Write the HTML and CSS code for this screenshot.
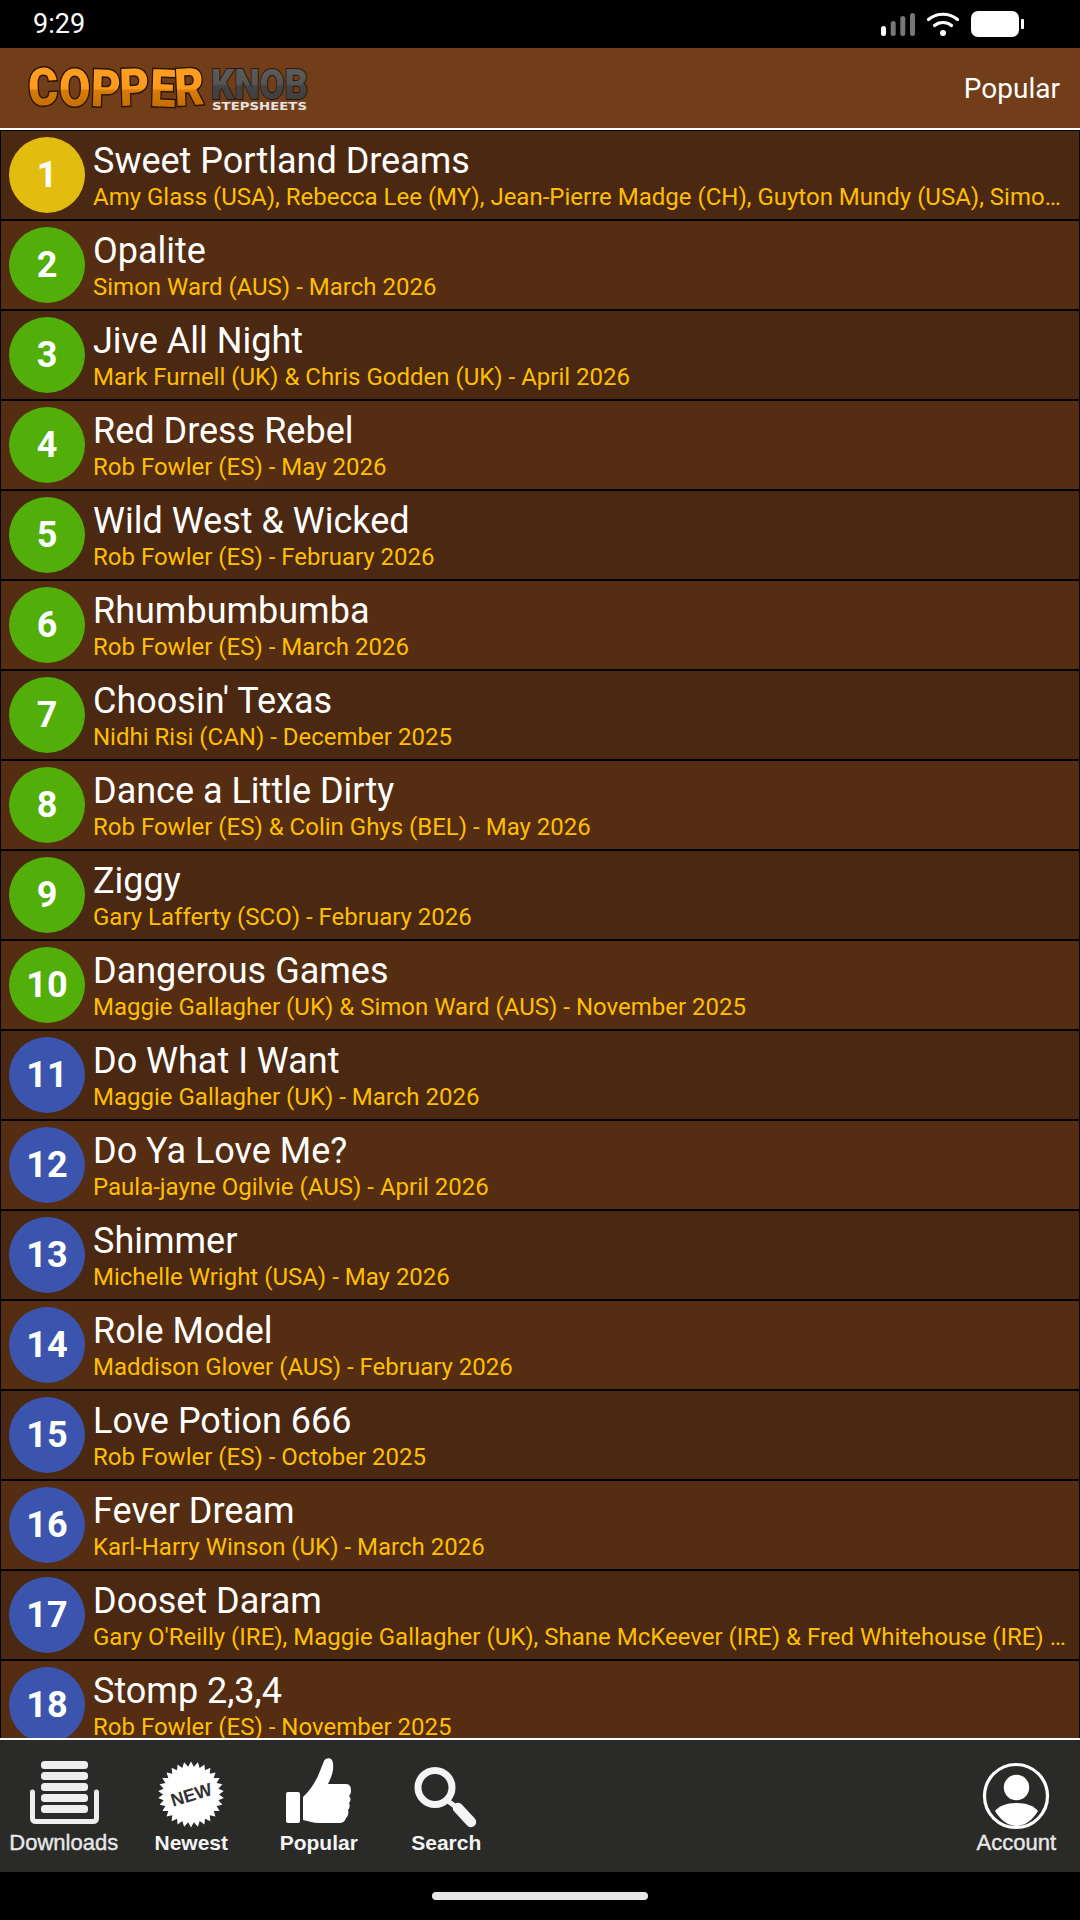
FILE: index.html
```html
<!DOCTYPE html>
<html lang="en">
<head>
    <meta charset="UTF-8">
    <meta name="viewport" content="width=device-width, initial-scale=1.0">
    <title>CopperKnob Stepsheets - Popular</title>
    <link rel="stylesheet" href="styles.css">
</head>
<body>
    <div class="status-bar">
        <span class="clock">9:29</span>
        <div class="status-icons">
            <svg width="34" height="23" viewBox="0 0 34 23">
                <rect x="0" y="13" width="5" height="10" rx="2.5" fill="#fff"/>
                <rect x="9.7" y="8" width="5" height="15" rx="2.5" fill="#777"/>
                <rect x="19.3" y="3" width="5" height="20" rx="2.5" fill="#777"/>
                <rect x="29" y="0" width="5" height="23" rx="2.5" fill="#777"/>
            </svg>
            <svg width="32" height="24" viewBox="0 0 32 24">
                <path d="M1.500 7.500 C9.500 0.500 22.500 0.500 30.500 7.500" fill="none" stroke="#fff" stroke-width="3.2" stroke-linecap="round"/>
                <path d="M7.500 13.500 C12 9.500 20 9.500 24.500 13.500" fill="none" stroke="#fff" stroke-width="3.2" stroke-linecap="round"/>
                <circle cx="16" cy="21" r="3" fill="#fff"/>
            </svg>
            <svg width="53" height="26" viewBox="0 0 53 26">
                <rect x="0" y="0" width="48" height="26" rx="7" fill="#fff"/>
                <rect x="50" y="8" width="3" height="10" rx="1" fill="#fff"/>
            </svg>
        </div>
    </div>

    <header>
        <svg class="logo" width="290" height="50" viewBox="0 0 290 50">
            <defs>
                <linearGradient id="copperFill" x1="0" y1="0" x2="0" y2="1">
                    <stop offset="0" stop-color="#ffa025"/>
                    <stop offset="0.5" stop-color="#ff9a1c"/>
                    <stop offset="0.54" stop-color="#d67c08"/>
                    <stop offset="1" stop-color="#b86200"/>
                </linearGradient>
                <linearGradient id="knobFill" x1="0" y1="0" x2="0" y2="1">
                    <stop offset="0" stop-color="#5e5e5e"/>
                    <stop offset="0.5" stop-color="#555"/>
                    <stop offset="0.54" stop-color="#444"/>
                    <stop offset="1" stop-color="#3c3c3c"/>
                </linearGradient>
            </defs>
            <text class="logo-copper" x="3" y="43" textLength="176" lengthAdjust="spacingAndGlyphs" rotate="-3 0 2 -2 2 -3">COPPER</text>
            <text class="logo-knob" x="185" y="36" textLength="97" lengthAdjust="spacingAndGlyphs">KNOB</text>
            <text class="logo-sub" x="186" y="47" textLength="95" lengthAdjust="spacingAndGlyphs">STEPSHEETS</text>
        </svg>
        <span class="page-title">Popular</span>
    </header>

    <main>
        <div class="row"><div class="rank gold">1</div><div class="info"><div class="name">Sweet Portland Dreams</div><div class="meta">Amy Glass (USA), Rebecca Lee (MY), Jean-Pierre Madge (CH), Guyton Mundy (USA), Simon Ward (AUS) &amp; Roy Verdonk (NL) - March 2026</div></div></div>
        <div class="row"><div class="rank green">2</div><div class="info"><div class="name">Opalite</div><div class="meta">Simon Ward (AUS) - March 2026</div></div></div>
        <div class="row"><div class="rank green">3</div><div class="info"><div class="name">Jive All Night</div><div class="meta">Mark Furnell (UK) &amp; Chris Godden (UK) - April 2026</div></div></div>
        <div class="row"><div class="rank green">4</div><div class="info"><div class="name">Red Dress Rebel</div><div class="meta">Rob Fowler (ES) - May 2026</div></div></div>
        <div class="row"><div class="rank green">5</div><div class="info"><div class="name">Wild West &amp; Wicked</div><div class="meta">Rob Fowler (ES) - February 2026</div></div></div>
        <div class="row"><div class="rank green">6</div><div class="info"><div class="name">Rhumbumbumba</div><div class="meta">Rob Fowler (ES) - March 2026</div></div></div>
        <div class="row"><div class="rank green">7</div><div class="info"><div class="name">Choosin' Texas</div><div class="meta">Nidhi Risi (CAN) - December 2025</div></div></div>
        <div class="row"><div class="rank green">8</div><div class="info"><div class="name">Dance a Little Dirty</div><div class="meta">Rob Fowler (ES) &amp; Colin Ghys (BEL) - May 2026</div></div></div>
        <div class="row"><div class="rank green">9</div><div class="info"><div class="name">Ziggy</div><div class="meta">Gary Lafferty (SCO) - February 2026</div></div></div>
        <div class="row"><div class="rank green">10</div><div class="info"><div class="name">Dangerous Games</div><div class="meta">Maggie Gallagher (UK) &amp; Simon Ward (AUS) - November 2025</div></div></div>
        <div class="row"><div class="rank blue">11</div><div class="info"><div class="name">Do What I Want</div><div class="meta">Maggie Gallagher (UK) - March 2026</div></div></div>
        <div class="row"><div class="rank blue">12</div><div class="info"><div class="name">Do Ya Love Me?</div><div class="meta">Paula-jayne Ogilvie (AUS) - April 2026</div></div></div>
        <div class="row"><div class="rank blue">13</div><div class="info"><div class="name">Shimmer</div><div class="meta">Michelle Wright (USA) - May 2026</div></div></div>
        <div class="row"><div class="rank blue">14</div><div class="info"><div class="name">Role Model</div><div class="meta">Maddison Glover (AUS) - February 2026</div></div></div>
        <div class="row"><div class="rank blue">15</div><div class="info"><div class="name">Love Potion 666</div><div class="meta">Rob Fowler (ES) - October 2025</div></div></div>
        <div class="row"><div class="rank blue">16</div><div class="info"><div class="name">Fever Dream</div><div class="meta">Karl-Harry Winson (UK) - March 2026</div></div></div>
        <div class="row"><div class="rank blue">17</div><div class="info"><div class="name">Dooset Daram</div><div class="meta">Gary O'Reilly (IRE), Maggie Gallagher (UK), Shane McKeever (IRE) &amp; Fred Whitehouse (IRE) - March 2026</div></div></div>
        <div class="row"><div class="rank blue">18</div><div class="info"><div class="name">Stomp 2,3,4</div><div class="meta">Rob Fowler (ES) - November 2025</div></div></div>
    </main>

    <footer>
        <div class="tab tab-downloads">
            <svg width="72" height="72" viewBox="0 0 72 72">
                <rect x="13" y="3" width="47" height="8" rx="3.500" fill="#eee"/>
                <rect x="13" y="14" width="47" height="8" rx="3.500" fill="#eee"/>
                <rect x="13" y="25" width="47" height="8" rx="3.500" fill="#eee"/>
                <rect x="13" y="36" width="47" height="8" rx="3.500" fill="#eee"/>
                <rect x="13" y="47" width="47" height="8" rx="3.500" fill="#eee"/>
                <path d="M4.500 34 V60 Q4.500 63.500 8 63.500 H65 Q68.500 63.500 68.500 60 V34" fill="none" stroke="#eee" stroke-width="5" stroke-linecap="round"/>
            </svg>
            <span>Downloads</span>
        </div>
        <div class="tab tab-newest">
            <svg width="72" height="72" viewBox="0 0 72 72">
                <polygon fill="#fff" points="36,3.5 38.9,8.7 42.9,4.2 44.7,9.9 49.4,6.4 50,12.3 55.4,9.8 54.7,15.7 60.5,14.4 58.7,20 64.6,20 61.6,25.1 67.4,26.3 63.4,30.7 68.8,33.1 64,36.5 68.8,39.9 63.4,42.3 67.4,46.7 61.6,47.9 64.6,53 58.7,53 60.5,58.6 54.7,57.3 55.4,63.2 50,60.7 49.4,66.6 44.7,63.1 42.9,68.8 38.9,64.3 36,69.5 33.1,64.3 29.1,68.8 27.3,63.1 22.6,66.6 22,60.7 16.6,63.2 17.3,57.3 11.500,58.6 13.3,53 7.4,53 10.4,47.9 4.6,46.7 8.6,42.3 3.2,39.9 8,36.5 3.2,33.1 8.6,30.7 4.6,26.3 10.4,25.1 7.4,20 13.3,20 11.500,14.4 17.3,15.7 16.6,9.8 22,12.3 22.6,6.4 27.3,9.9 29.1,4.2 33.1,8.7"/>
                <text class="new-text" x="36" y="43" text-anchor="middle" transform="rotate(-17 36 36)">NEW</text>
            </svg>
            <span>Newest</span>
        </div>
        <div class="tab tab-popular">
            <svg width="72" height="72" viewBox="0 0 72 72">
                <rect x="3" y="34" width="14" height="31" rx="2" fill="#fff"/>
                <path d="M20 39 C26 34 31 26 35 18 C37 13 39 8 41 3 C43 -1 50 -1 50 6 C51 13 48 20 45 26 L63 26 C67 26 68 29 68 33 C68 35 67 37 66 38 C68 40 68 43 66 45 C67 47 67 50 65 52 C66 55 65 58 63 60 C62 63 60 65 56 65 L36 65 C30 65 26 63 20 62 Z" fill="#fff"/>
            </svg>
            <span>Popular</span>
        </div>
        <div class="tab tab-search">
            <svg width="72" height="72" viewBox="0 0 72 72">
                <circle cx="25" cy="29.5" r="17" fill="none" stroke="#f4f4f4" stroke-width="7"/>
                <path d="M38 43 L50 52" fill="none" stroke="#f4f4f4" stroke-width="5"/>
                <path d="M48 50 L61 64" fill="none" stroke="#f4f4f4" stroke-width="10.500" stroke-linecap="round"/>
            </svg>
            <span>Search</span>
        </div>
        <div class="tab tab-account">
            <svg width="72" height="72" viewBox="0 0 72 72">
                <circle cx="36" cy="38" r="31.500" fill="none" stroke="#fff" stroke-width="3.200"/>
                <circle cx="36.500" cy="29.500" r="12.700" fill="#fff"/>
                <path d="M15 53 C19 48 26 45 36.500 45 C47 45 54 48 58 53 C52 63 44 68 36.500 68 C29 68 21 63 15 53 Z" fill="#fff"/>
            </svg>
            <span>Account</span>
        </div>
    </footer>

    <div class="nav-bar"><div class="home-pill"></div></div>
</body>
</html>
```

FILE: styles.css
```css
* {
    box-sizing: border-box;
}

body {
    font-family: Roboto, sans-serif;
    margin: 0;
    height: 1920px;
    display: flex;
    flex-direction: column;
    background-color: #000;
    overflow: hidden;
}

.status-bar {
    height: 48px;
    flex-shrink: 0;
    display: flex;
    align-items: center;
    justify-content: space-between;
    padding: 0 56px 0 33px;
    color: #fff;
}

.clock {
    font-size: 27px;
}

.status-icons {
    display: flex;
    align-items: center;
    gap: 12px;
}

header {
    height: 82px;
    flex-shrink: 0;
    display: flex;
    align-items: center;
    justify-content: space-between;
    padding: 0 20px 0 26px;
    background-color: #723d19;
    border-bottom: 2px solid #fff;
}

.logo {
    display: block;
    overflow: visible;
}

.logo-copper {
    font-family: Roboto, sans-serif;
    font-size: 52px;
    font-weight: 900;
    fill: url(#copperFill);
    stroke: #2b1503;
    stroke-width: 3px;
    paint-order: stroke;
}

.logo-knob {
    font-family: Roboto, sans-serif;
    font-size: 43px;
    font-weight: 900;
    fill: url(#knobFill);
    stroke: #2a1a0e;
    stroke-width: 2px;
    paint-order: stroke;
}

.logo-sub {
    font-family: "DejaVu Sans", sans-serif;
    font-size: 11px;
    font-weight: bold;
    fill: #e4e4e4;
}

.page-title {
    font-size: 28px;
    color: #fff;
}

main {
    flex: 1;
    min-height: 0;
    overflow: hidden;
    border-bottom: 2px solid #fff;
}

.row {
    height: 90px;
    display: flex;
    align-items: center;
    padding: 0 8px;
    gap: 8px;
    border: 1px solid #000;
    background-color: #552d12;
}

.row:nth-child(odd) {
    background-color: #4a2811;
}

.rank {
    width: 76px;
    height: 76px;
    flex-shrink: 0;
    display: flex;
    align-items: center;
    justify-content: center;
    border-radius: 50%;
    color: #fff;
    font-size: 36px;
    font-weight: bold;
}

.gold {
    background-color: #e2bd0f;
}

.green {
    background-color: #52ae08;
}

.blue {
    background-color: #3b55ae;
}

.info {
    flex: 1;
    min-width: 0;
}

.name {
    font-size: 36px;
    line-height: 42px;
    color: #fff;
}

.meta {
    font-size: 24px;
    line-height: 28px;
    margin-top: 1px;
    color: #ffbf00;
    white-space: nowrap;
    overflow: hidden;
    text-overflow: ellipsis;
}

footer {
    height: 132px;
    flex-shrink: 0;
    display: flex;
    align-items: flex-start;
    padding-top: 18px;
    background-color: #2a2a29;
}

.tab {
    width: 127.5px;
    display: flex;
    flex-direction: column;
    align-items: center;
    color: #e8e8e8;
    font-family: "Liberation Sans", sans-serif;
    font-size: 22px;
    line-height: 26px;
    -webkit-text-stroke: 0.4px #e8e8e8;
}

.tab svg {
    display: block;
    overflow: visible;
    -webkit-text-stroke: 0;
}

.tab-newest,
.tab-popular,
.tab-search {
    color: #f4f4f4;
    font-size: 21px;
    font-weight: bold;
    -webkit-text-stroke: 0;
}

.new-text {
    font-family: "Liberation Sans", sans-serif;
    font-size: 18px;
    font-weight: bold;
    fill: #333;
}

.tab-account {
    margin-left: auto;
}

.nav-bar {
    height: 48px;
    flex-shrink: 0;
    display: flex;
    justify-content: center;
    padding-top: 20px;
}

.home-pill {
    width: 216px;
    height: 8px;
    border-radius: 4px;
    background-color: #e6e6e6;
}
```
